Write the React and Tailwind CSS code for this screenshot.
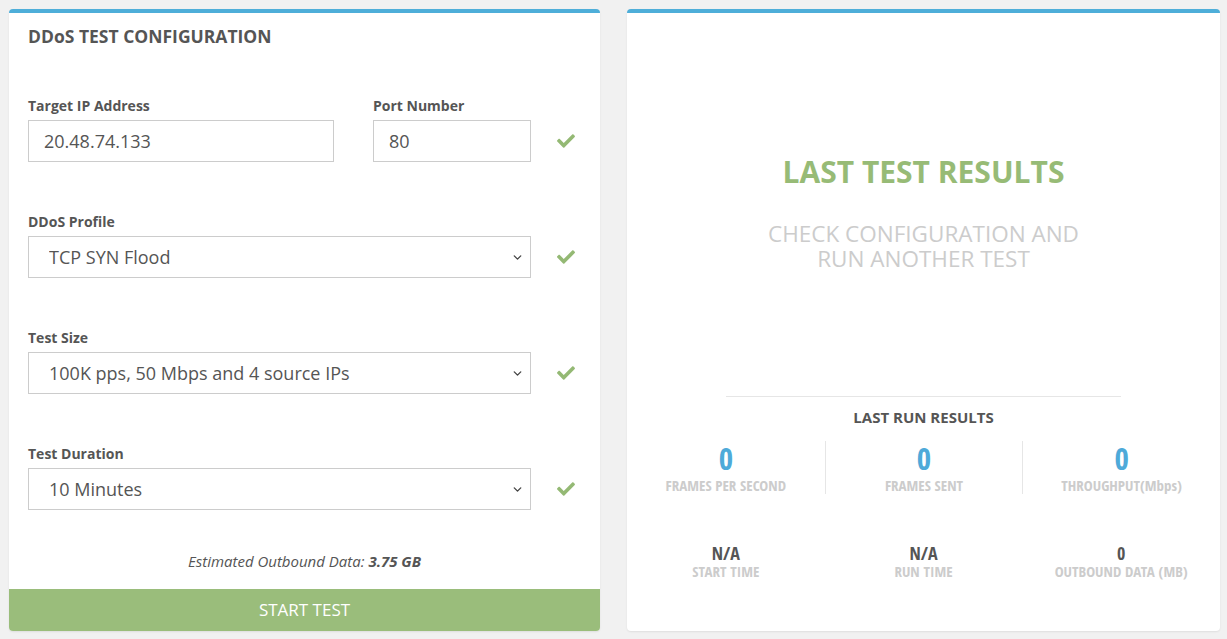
import { ChevronDown } from "lucide-react";

function Check() {
  return (
    <svg viewBox="0 0 512 512" className="h-[18px] w-[20px]" fill="#94b974">
      <path d="M173.9 439.4L7.5 273c-10-10-10-26.2 0-36.2l36.2-36.2c10-10 26.2-10 36.2 0L192 312.7 432.1 72.6c10-10 26.2-10 36.2 0l36.2 36.2c10 10 10 26.2 0 36.2L210.1 439.4c-10 10-26.2 10-36.2 0z" />
    </svg>
  );
}

function Label({ children }) {
  return (
    <label className="mb-1 block text-[14px] font-bold leading-5 text-[#555]">
      {children}
    </label>
  );
}

function SelectField({ label, value }) {
  return (
    <div className="mt-[50px]">
      <Label>{label}</Label>
      <div className="flex items-center">
        <div className="relative w-[503px] shrink-0">
          <select
            value={value}
            readOnly
            className="h-[42px] w-full appearance-none border border-[#ccc] bg-white pl-[20px] text-[18px] text-[#555] outline-none"
          >
            <option>{value}</option>
          </select>
          <ChevronDown
            className="pointer-events-none absolute right-[7px] top-[15px] h-[13px] w-[13px] text-[#444]"
            strokeWidth={2.5}
          />
        </div>
        <div className="flex w-[69px] justify-center">
          <Check />
        </div>
      </div>
    </div>
  );
}

function Stat({ value, label, big, border }) {
  return (
    <div
      className={
        "flex flex-col items-center " + (border ? "border-l border-[#e6e6e6]" : "")
      }
    >
      {big ? (
        <span className="text-[31px] font-bold leading-[35px] text-[#4eaad9]">
          {value}
        </span>
      ) : (
        <span className="text-[18px] font-bold leading-[18px] text-[#555]">
          {value}
        </span>
      )}
      <span className="text-[15px] font-bold leading-[18px] text-[#cccccc]">
        {label}
      </span>
    </div>
  );
}

export default function App() {
  const condensed =
    "font-['Open_Sans_Condensed','Liberation_Sans_Narrow','Open_Sans',sans-serif]";

  return (
    <main className="flex h-[639px] w-[1227px] gap-[27px] bg-[#f1f1f1] pl-[9px] pt-[9px] font-['Open_Sans',sans-serif]">
      <section className="flex h-[622px] w-[591px] flex-col overflow-hidden rounded-[4px] border-t-4 border-[#4eaed9] bg-white shadow-[0_1px_2px_rgba(0,0,0,0.08)]">
        <div className="flex-1 pl-[19px] pt-[11px]">
          <h2 className="text-[17.5px] font-bold leading-6 text-[#555]">
            DDoS TEST CONFIGURATION
          </h2>

          <div className="mt-[48px] flex items-end">
            <div className="w-[306px] shrink-0">
              <Label>Target IP Address</Label>
              <input
                readOnly
                value="20.48.74.133"
                className="h-[42px] w-full border border-[#ccc] px-[15px] text-[18px] text-[#555] outline-none"
              />
            </div>
            <div className="ml-[39px] w-[158px] shrink-0">
              <Label>Port Number</Label>
              <input
                readOnly
                value="80"
                className="h-[42px] w-full border border-[#ccc] px-[15px] text-[18px] text-[#555] outline-none"
              />
            </div>
            <div className="flex h-[42px] w-[69px] items-center justify-center">
              <Check />
            </div>
          </div>

          <SelectField label="DDoS Profile" value="TCP SYN Flood" />
          <SelectField
            label="Test Size"
            value="100K pps, 50 Mbps and 4 source IPs"
          />
          <SelectField label="Test Duration" value="10 Minutes" />

          <p className="mt-[41px] pr-[19px] text-center text-[15px] italic leading-5 text-[#555]">
            Estimated Outbound Data: <b>3.75 GB</b>
          </p>
        </div>
        <button className="h-[42px] w-full bg-[#9abd7b] text-[17px] text-white">
          START TEST
        </button>
      </section>

      <section className="flex h-[622px] w-[593px] flex-col items-center rounded-[4px] border-t-4 border-[#4eaed9] bg-white shadow-[0_1px_2px_rgba(0,0,0,0.08)]">
        <h2 className="mt-[141px] text-[30px] font-bold leading-9 text-[#97bb76]">
          LAST TEST RESULTS
        </h2>
        <p className="mt-[31px] text-center text-[22.5px] leading-[25px] text-[#cccccc]">
          CHECK CONFIGURATION AND
          <br />
          RUN ANOTHER TEST
        </p>

        <div className="mt-[125px] w-[395px] border-t border-[#e6e6e6]" />
        <h3 className="mt-[10px] text-[15px] font-bold leading-5 text-[#555]">
          LAST RUN RESULTS
        </h3>

        <div className={"mt-[14px] grid w-full grid-cols-3 " + condensed}>
          <Stat big value="0" label="FRAMES PER SECOND" />
          <Stat big border value="0" label="FRAMES SENT" />
          <Stat big border value="0" label="THROUGHPUT(Mbps)" />
        </div>

        <div className={"mt-[50px] grid w-full grid-cols-3 " + condensed}>
          <Stat value="N/A" label="START TIME" />
          <Stat value="N/A" label="RUN TIME" />
          <Stat value="0" label="OUTBOUND DATA (MB)" />
        </div>
      </section>
    </main>
  );
}
